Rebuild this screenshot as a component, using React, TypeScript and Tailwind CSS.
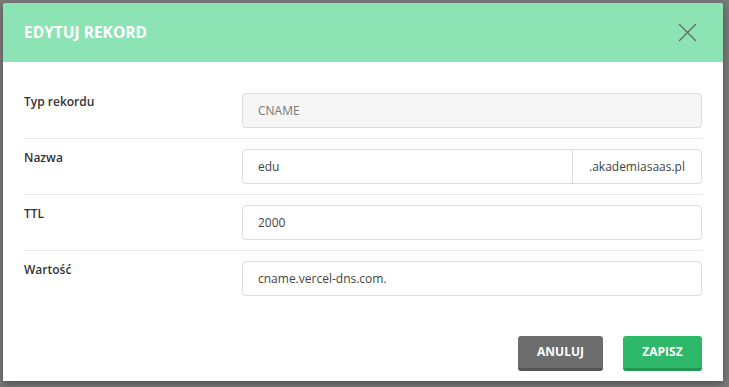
const rows = [
  { label: 'Typ rekordu', value: 'CNAME', disabled: true },
  { label: 'Nazwa', value: 'edu', addon: '.akademiasaas.pl' },
  { label: 'TTL', value: '2000' },
  { label: 'Wartość', value: 'cname.vercel-dns.com.' },
];

export default function App() {
  return (
    <div className="min-h-[387px] w-full bg-[#7a7a7a] pl-[3px] pt-[3px] font-['Open_Sans',sans-serif]">
      <div className="w-[720px] overflow-hidden rounded-t-[3px] bg-white shadow-[0_3px_8px_rgba(0,0,0,0.35)]">
        <div className="flex h-[59px] items-center justify-between bg-[#8ce4b4] pl-[21px] pr-[26px]">
          <h2 className="text-[15.5px] font-bold text-white">EDYTUJ REKORD</h2>
          <svg width="19" height="19" viewBox="0 0 19 19" className="text-[#666]">
            <path d="M1 1 L18 18 M18 1 L1 18" stroke="currentColor" strokeWidth="1.3" />
          </svg>
        </div>

        <div className="px-[21px] pt-[21px]">
          {rows.map((row, i) => (
            <div
              key={row.label}
              className={`flex py-[10px] ${i < rows.length - 1 ? 'border-b border-[#e8e8e8]' : ''}`}
            >
              <div className="-mt-[1px] w-[218px] text-[12px] font-semibold leading-[20px] text-[#333]">
                {row.label}
              </div>
              <div
                className={`flex h-[35px] flex-1 overflow-hidden rounded-[4px] border border-[#dcdcdc] text-[12px] ${
                  row.disabled ? 'bg-[#f6f6f6] text-[#777]' : 'bg-white text-[#444]'
                }`}
              >
                <div className="flex flex-1 items-center px-[15px]">{row.value}</div>
                {row.addon && (
                  <div className="flex w-[129px] items-center border-l border-[#dcdcdc] pl-[16px] text-[#444]">
                    {row.addon}
                  </div>
                )}
              </div>
            </div>
          ))}
        </div>

        <div className="flex justify-end gap-[20px] pb-[10px] pr-[21px] pt-[30px]">
          <button className="h-[35px] w-[85px] rounded-[3px] border-b-[3px] border-[#555] bg-[#6d6d6d] text-[12px] font-bold text-white">
            ANULUJ
          </button>
          <button className="h-[35px] w-[79px] rounded-[3px] border-b-[3px] border-[#239654] bg-[#2db86a] text-[12px] font-bold text-white">
            ZAPISZ
          </button>
        </div>
      </div>
    </div>
  );
}
